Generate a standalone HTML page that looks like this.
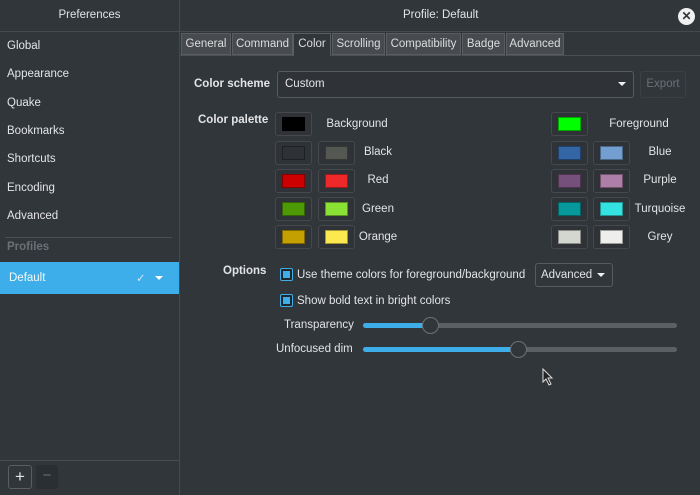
<!DOCTYPE html><html><head><style>
*{margin:0;padding:0;box-sizing:border-box}
body{width:700px;height:495px;background:#31363b;font-family:"Liberation Sans",sans-serif;font-size:11.5px;color:#e3e4e5;position:relative;overflow:hidden}
.a{position:absolute;white-space:nowrap}
.sw{position:absolute;width:37px;height:24px;border:1px solid #45494e;border-radius:3px;background:#2f3338}
.sw i{position:absolute;left:6px;top:4px;width:23px;height:14px;border:1px solid rgba(0,0,0,.35)}
.tab{position:absolute;top:33px;height:22px;background:#474b50;border:1px solid #5a5e63;color:#dcdcdc;text-align:center;line-height:20px}
.lab{position:absolute;width:90px;text-align:center}
.cb{position:absolute;width:13px;height:13px;border:1px solid #3daee9;border-radius:2px;background:#232629}
.cb i{position:absolute;left:2px;top:2px;width:7px;height:7px;background:#3daee9}
.sl{position:absolute;left:363px;width:314px;height:5px;border-radius:3px;background:#5c6064}
.sl b{position:absolute;left:0;top:0;height:5px;border-radius:3px;background:#3daee9}
.h{position:absolute;width:17px;height:17px;border-radius:50%;background:#31363b;border:1px solid #6e7276;top:-6px}
</style></head><body>
<div class="a" style="left:179px;top:0;width:1px;height:495px;background:#454a4f"></div>
<div class="a" style="left:0;top:31px;width:700px;height:1px;background:#454a4f"></div>
<div class="a" style="left:0;top:9px;width:179px;text-align:center">Preferences</div>
<div class="a" style="left:7px;top:40px">Global</div>
<div class="a" style="left:7px;top:68px">Appearance</div>
<div class="a" style="left:7px;top:97px">Quake</div>
<div class="a" style="left:7px;top:125px">Bookmarks</div>
<div class="a" style="left:7px;top:153px">Shortcuts</div>
<div class="a" style="left:7px;top:182px">Encoding</div>
<div class="a" style="left:7px;top:210px">Advanced</div>
<div class="a" style="left:5px;top:237px;width:167px;height:1px;background:#4a4f54"></div>
<div class="a" style="left:7px;top:241px;color:#6b7075;font-weight:bold">Profiles</div>
<div class="a" style="left:0;top:262px;width:179px;height:32px;background:#3daee9"></div>
<div class="a" style="left:9px;top:272px;color:#f4f8fa">Default</div>
<div class="a" style="left:136px;top:271px;color:#cde9f8">✓</div>
<div class="a" style="left:155px;top:276px;border-left:4px solid transparent;border-right:4px solid transparent;border-top:4px solid #fff"></div>
<div class="a" style="left:0;top:460px;width:179px;height:1px;background:#4a4f54"></div>
<div class="a" style="left:8px;top:465px;width:24px;height:24px;border:1px solid #5a5e63;border-radius:3px;text-align:center;line-height:21px;font-size:17px">+</div>
<div class="a" style="left:36px;top:465px;width:22px;height:24px;background:#2b2f33;border-radius:3px;text-align:center;line-height:21px;color:#6b7075;font-size:15px">−</div>
<div class="a" style="left:403px;top:9px">Profile: Default</div>
<div class="a" style="left:678px;top:8px;width:17px;height:17px;border-radius:50%;background:#eff0f1;color:#31363b;text-align:center;line-height:16px;font-size:12px;font-weight:bold">✕</div>
<div class="a" style="left:180px;top:55px;width:520px;height:1px;background:#4a4f54"></div>
<div class="tab" style="left:181px;width:50px">General</div>
<div class="tab" style="left:232px;width:61px">Command</div>
<div class="tab" style="left:293px;width:38px;background:#31363b;border-bottom:none;height:23px">Color</div>
<div class="tab" style="left:332px;width:53px">Scrolling</div>
<div class="tab" style="left:386px;width:75px">Compatibility</div>
<div class="tab" style="left:462px;width:43px">Badge</div>
<div class="tab" style="left:506px;width:58px">Advanced</div>
<div class="a" style="left:194px;top:78px;font-weight:bold">Color scheme</div>
<div class="a" style="left:277px;top:71px;width:357px;height:27px;border:1px solid #575b60;border-radius:3px;background:#2f3338"></div>
<div class="a" style="left:285px;top:78px">Custom</div>
<div class="a" style="left:618px;top:82px;border-left:4px solid transparent;border-right:4px solid transparent;border-top:4px solid #eff0f1"></div>
<div class="a" style="left:640px;top:71px;width:46px;height:27px;border:1px solid #3c4045;border-radius:3px;color:#6b7075;text-align:center;line-height:25px">Export</div>
<div class="a" style="left:198px;top:114px;font-weight:bold">Color palette</div>
<div class="sw" style="left:275px;top:112px"><i style="background:#000"></i></div>
<div class="lab" style="left:312px;top:118px">Background</div>
<div class="sw" style="left:275px;top:141px"><i style="background:#2e3236"></i></div><div class="sw" style="left:318px;top:141px"><i style="background:#555753"></i></div><div class="lab" style="left:333px;top:146px">Black</div>
<div class="sw" style="left:275px;top:169px"><i style="background:#cc0000"></i></div><div class="sw" style="left:318px;top:169px"><i style="background:#ef2929"></i></div><div class="lab" style="left:333px;top:174px">Red</div>
<div class="sw" style="left:275px;top:197px"><i style="background:#4e9a06"></i></div><div class="sw" style="left:318px;top:197px"><i style="background:#8ae234"></i></div><div class="lab" style="left:333px;top:203px">Green</div>
<div class="sw" style="left:275px;top:225px"><i style="background:#c4a000"></i></div><div class="sw" style="left:318px;top:225px"><i style="background:#fce94f"></i></div><div class="lab" style="left:333px;top:231px">Orange</div>
<div class="sw" style="left:551px;top:112px"><i style="background:#00ff00"></i></div>
<div class="lab" style="left:594px;top:118px">Foreground</div>
<div class="sw" style="left:551px;top:141px"><i style="background:#3465a4"></i></div><div class="sw" style="left:593px;top:141px"><i style="background:#729fcf"></i></div><div class="lab" style="left:615px;top:146px">Blue</div>
<div class="sw" style="left:551px;top:169px"><i style="background:#75507b"></i></div><div class="sw" style="left:593px;top:169px"><i style="background:#ad7fa8"></i></div><div class="lab" style="left:615px;top:174px">Purple</div>
<div class="sw" style="left:551px;top:197px"><i style="background:#06989a"></i></div><div class="sw" style="left:593px;top:197px"><i style="background:#34e2e2"></i></div><div class="lab" style="left:615px;top:203px">Turquoise</div>
<div class="sw" style="left:551px;top:225px"><i style="background:#d3d7cf"></i></div><div class="sw" style="left:593px;top:225px"><i style="background:#eeeeec"></i></div><div class="lab" style="left:615px;top:231px">Grey</div>
<div class="a" style="left:223px;top:265px;font-weight:bold">Options</div>
<div class="cb" style="left:280px;top:268px"><i></i></div>
<div class="a" style="left:297px;top:269px">Use theme colors for foreground/background</div>
<div class="a" style="left:535px;top:263px;width:78px;height:24px;border:1px solid #575b60;border-radius:3px"></div>
<div class="a" style="left:541px;top:269px">Advanced</div>
<div class="a" style="left:597px;top:273px;border-left:4px solid transparent;border-right:4px solid transparent;border-top:4px solid #eff0f1"></div>
<div class="cb" style="left:280px;top:294px"><i></i></div>
<div class="a" style="left:297px;top:295px">Show bold text in bright colors</div>
<div class="a" style="left:284px;top:319px">Transparency</div>
<div class="sl" style="top:323px"><b style="width:67px"></b><div class="h" style="left:59px"></div></div>
<div class="a" style="left:276px;top:343px">Unfocused dim</div>
<div class="sl" style="top:347px"><b style="width:155px"></b><div class="h" style="left:147px"></div></div>
<svg class="a" style="left:542px;top:368px" width="12" height="18"><path d="M1 1 L1 14 L4 11 L7 17 L9 16 L6 10 L10 10 Z" fill="#222" stroke="#ddd" stroke-width="1"/></svg>
</body></html>
